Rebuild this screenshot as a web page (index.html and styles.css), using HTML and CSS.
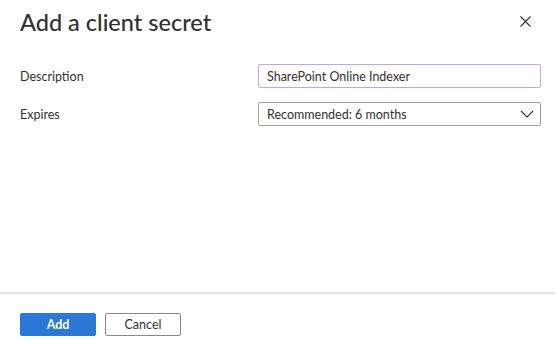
FILE: index.html
```html
<!DOCTYPE html>
<html>
<head>
<meta charset="utf-8">
<link rel="stylesheet" href="styles.css">
</head>
<body>
<div class="panel">
  <header class="header">
    <h1 class="title">Add a client secret</h1>
    <button class="close" aria-label="Close">
      <svg width="11" height="11" viewBox="0 0 11 11"><path d="M0.5 0.5L10.5 10.5M10.5 0.5L0.5 10.5" stroke="#323130" stroke-width="1.1" fill="none"/></svg>
    </button>
  </header>
  <main class="form">
    <div class="row">
      <label class="label">Description</label>
      <div class="field input focused">SharePoint Online Indexer</div>
    </div>
    <div class="row">
      <label class="label">Expires</label>
      <div class="field select">
        <span>Recommended: 6 months</span>
        <svg class="chev" width="14" height="8" viewBox="0 0 14 8"><path d="M1 1L7 7L13 1" stroke="#323130" stroke-width="1.1" fill="none"/></svg>
      </div>
    </div>
  </main>
  <footer class="footer">
    <button class="btn primary">Add</button>
    <button class="btn secondary">Cancel</button>
  </footer>
</div>
</body>
</html>
```
FILE: styles.css
```css
* { box-sizing: border-box; }
html, body { margin: 0; padding: 0; background: #fff; }
body {
  font-family: "Lato", "Liberation Sans", sans-serif;
  color: #323130;
  width: 555px;
  height: 346px;
  overflow: hidden;
}
.panel {
  display: flex;
  flex-direction: column;
  height: 346px;
}
.header {
  display: flex;
  align-items: center;
  justify-content: space-between;
  padding: 3px 24px 0 20px;
  height: 40px;
}
.title {
  margin: 0;
  font-size: 23.5px;
  font-weight: 500;
  color: #323130;
  line-height: 32px;
}
.close {
  border: none;
  background: none;
  padding: 0;
  width: 11px;
  height: 11px;
  display: flex;
}
.form {
  flex: 1;
  display: flex;
  flex-direction: column;
  gap: 14px;
  padding: 24px 14px 0 20px;
}
.row {
  display: flex;
  align-items: center;
  justify-content: space-between;
  height: 24px;
}
.label {
  font-size: 12.5px;
  color: #323130;
}
.field {
  width: 283px;
  height: 24px;
  border: 1px solid #8a8886;
  border-radius: 2px;
  font-size: 12.5px;
  padding: 0 8px;
  display: flex;
  align-items: center;
  color: #323130;
}
.field.focused {
  border-color: #c3a6dc;
}
.select {
  justify-content: space-between;
  border-color: #a19f9d;
  padding-right: 6px;
}
.chev { display: block; }
.footer {
  border-top: 2px solid #e1e1e1;
  height: 54px;
  display: flex;
  align-items: flex-start;
  gap: 9px;
  padding: 19px 20px 0 20px;
}
.btn {
  width: 76px;
  height: 23px;
  border-radius: 2px;
  font-family: inherit;
  font-size: 12.5px;
  padding: 0;
  cursor: pointer;
}
.primary {
  background: #2b78d6;
  border: 1px solid #2b78d6;
  color: #fff;
  font-weight: 700;
}
.secondary {
  background: #fff;
  border: 1px solid #8a8886;
  color: #323130;
}
```
